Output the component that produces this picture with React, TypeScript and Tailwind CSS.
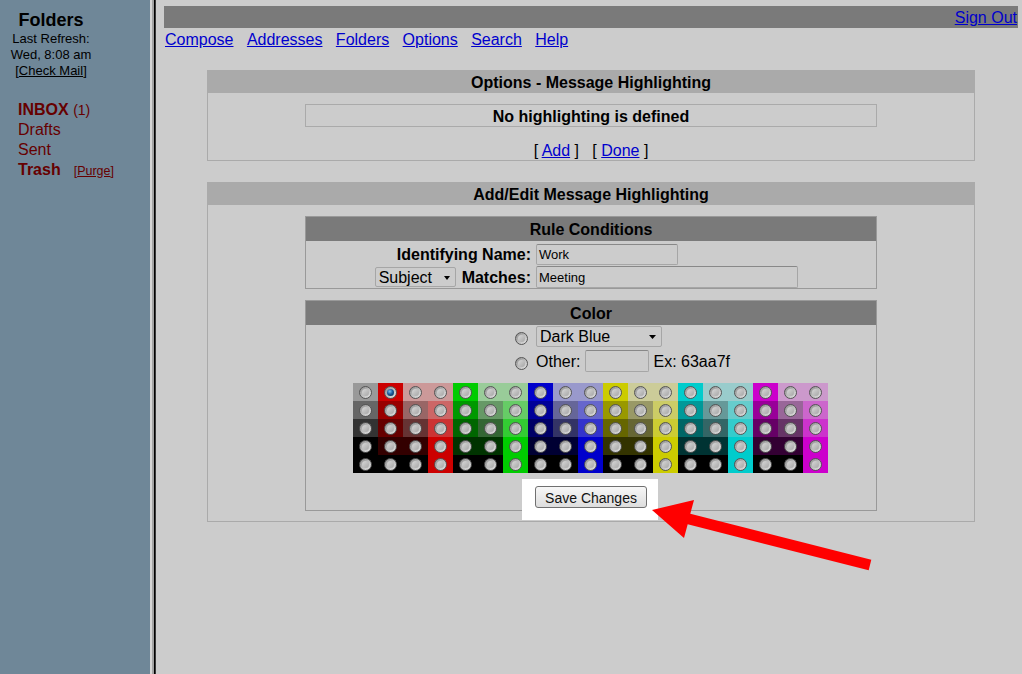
import React from "react";

const grid: string[][] = [
  ["#999999", "#666666", "#333333", "#000000", "#000000"],
  ["#cc0000", "#990000", "#660000", "#330000", "#000000"],
  ["#cc9999", "#996666", "#663333", "#330000", "#000000"],
  ["#cc9999", "#cc6666", "#cc3333", "#cc0000", "#cc0000"],
  ["#00cc00", "#009900", "#006600", "#003300", "#000000"],
  ["#99cc99", "#669966", "#336633", "#003300", "#000000"],
  ["#99cc99", "#66cc66", "#33cc33", "#00cc00", "#00cc00"],
  ["#0000cc", "#000099", "#000066", "#000033", "#000000"],
  ["#9999cc", "#666699", "#333366", "#000033", "#000000"],
  ["#9999cc", "#6666cc", "#3333cc", "#0000cc", "#0000cc"],
  ["#cccc00", "#999900", "#666600", "#333300", "#000000"],
  ["#cccc99", "#999966", "#666633", "#333300", "#000000"],
  ["#cccc99", "#cccc66", "#cccc33", "#cccc00", "#cccc00"],
  ["#00cccc", "#009999", "#006666", "#003333", "#000000"],
  ["#99cccc", "#669999", "#336666", "#003333", "#000000"],
  ["#99cccc", "#66cccc", "#33cccc", "#00cccc", "#00cccc"],
  ["#cc00cc", "#990099", "#660066", "#330033", "#000000"],
  ["#cc99cc", "#996699", "#663366", "#330033", "#000000"],
  ["#cc99cc", "#cc66cc", "#cc33cc", "#cc00cc", "#cc00cc"],
];

const navLinks = ["Compose", "Addresses", "Folders", "Options", "Search", "Help"];

function Radio({ checked }: { checked?: boolean }) {
  return (
    <span className="flex h-[13px] w-[13px] items-center justify-center rounded-full border border-[#555555] bg-[linear-gradient(135deg,#8c8c8c_0%,#b8b8b8_45%,#e4e4e4_100%)]">
      {checked ? (
        <span className="block h-[7px] w-[7px] rounded-full bg-[radial-gradient(circle_at_40%_35%,#7cc0f0_0%,#1a5a9a_45%,#06223f_100%)]" />
      ) : (
        <span className="block h-[7px] w-[7px] rounded-full bg-[linear-gradient(135deg,#d8d8d8,#a6a6a6)]" />
      )}
    </span>
  );
}

function Arrow({ small }: { small?: boolean }) {
  return small ? (
    <svg width="6" height="4" viewBox="0 0 6 4">
      <polygon points="0,0 6,0 3,4" fill="#000" />
    </svg>
  ) : (
    <svg width="7" height="4" viewBox="0 0 7 4">
      <polygon points="0,0 7,0 3.5,4" fill="#000" />
    </svg>
  );
}

function Link({ children }: { children: React.ReactNode }) {
  return <a className="cursor-pointer text-[#0000cc] underline">{children}</a>;
}

export default function App() {
  return (
    <div className="relative flex h-[674px] w-[1022px] overflow-hidden bg-[#cccccc] font-['Liberation_Sans',Arial,sans-serif] text-[16px] text-black">
      {/* folder list */}
      <aside className="w-[150px] shrink-0 bg-[#6f8798]">
        <div className="w-[102px] pt-[10px] text-center">
          <div className="text-[18px] font-bold leading-[21px]">Folders</div>
          <div className="text-[13px] leading-[16px]">Last Refresh:</div>
          <div className="text-[13px] leading-[16px]">Wed, 8:08 am</div>
          <div className="text-[13px] leading-[16px]">
            [<a className="underline">Check Mail</a>]
          </div>
        </div>
        <ul className="mt-[21px] pl-[18px] leading-[20px] text-[#660000]">
          <li>
            <span className="font-bold">INBOX</span> <span className="text-[14px]">(1)</span>
          </li>
          <li>Drafts</li>
          <li>Sent</li>
          <li>
            <span className="font-bold">Trash</span>
            <span className="ml-[13px] text-[12.5px]">
              [<a className="underline">Purge</a>]
            </span>
          </li>
        </ul>
      </aside>
      <div className="w-[2px] shrink-0 bg-[#d4d4d4]" />
      <div className="w-[2px] shrink-0 bg-[#a2a2a2]" />
      <div className="w-[1px] shrink-0 bg-black" />
      <div className="w-[1px] shrink-0 bg-[#3a3a3a]" />

      <main className="flex-1 pl-[8px] pr-[4px] pt-[6px]">
        <div className="flex h-[22px] items-center justify-end bg-[#7a7a7a] pr-[1px] pt-[2px]">
          <Link>Sign Out</Link>
        </div>
        <nav className="mt-[3px] flex h-[17px] gap-[13.4px] pl-[1px] leading-[18px]">
          {navLinks.map((l) => (
            <Link key={l}>{l}</Link>
          ))}
        </nav>

        {/* current highlighting */}
        <section className="mx-auto mt-[22px] w-[768px]">
          <div className="h-[23px] bg-[#aaaaaa] pt-[1px] text-center font-bold leading-[23px]">
            Options - Message Highlighting
          </div>
          <div className="border border-t-0 border-[#aaaaaa] pb-[1px] pt-[11px]">
            <div className="mx-auto flex h-[23px] w-[572px] items-center justify-center border border-[#aaaaaa] pt-[2px] font-bold">
              No highlighting is defined
            </div>
            <div className="mt-[14px] h-[18px] pt-[1px] text-center leading-[18px]">
              [ <Link>Add</Link> ]&nbsp;&nbsp; [ <Link>Done</Link> ]
            </div>
          </div>
        </section>

        {/* add / edit */}
        <section className="mx-auto mt-[21px] w-[768px]">
          <div className="h-[23px] bg-[#aaaaaa] pt-[1px] text-center font-bold leading-[23px]">
            Add/Edit Message Highlighting
          </div>
          <div className="border border-t-0 border-[#aaaaaa] pb-[10px] pt-[11px]">
            <div className="mx-auto w-[572px] border border-[#999999]">
              <div className="h-[24px] bg-[#7a7a7a] pt-[1px] text-center font-bold leading-[24px]">Rule Conditions</div>
              <div className="grid h-[23px] grid-cols-[228px_1fr] items-center">
                <div className="pr-[3px] pt-[2px] text-right font-bold">Identifying Name:</div>
                <div className="pl-[2px]">
                  <div className="flex h-[21px] w-[142px] items-center rounded-[2px] border border-[#a6a6a6] border-t-[#888888] pl-[2px] pt-[1px] text-[13px]">
                    Work
                  </div>
                </div>
              </div>
              <div className="grid h-[24px] grid-cols-[228px_1fr] items-center">
                <div className="flex items-center justify-end gap-[6px] pr-[3px]">
                  <div className="flex h-[20px] w-[81px] items-center justify-between rounded-[2px] border border-[#a6a6a6] pl-[3px] pr-[5px] pt-[1px]">
                    <span>Subject</span>
                    <Arrow small />
                  </div>
                  <span className="pt-[2px] font-bold">Matches:</span>
                </div>
                <div className="pl-[2px]">
                  <div className="flex h-[22px] w-[262px] items-center rounded-[2px] border border-[#a6a6a6] border-t-[#888888] pl-[2px] pt-[1px] text-[13px]">
                    Meeting
                  </div>
                </div>
              </div>
            </div>

            <div className="mx-auto mt-[11px] w-[572px] border border-[#999999] pb-[2px]">
              <div className="h-[24px] bg-[#7a7a7a] pt-[1px] text-center font-bold leading-[24px]">Color</div>
              <div className="grid h-[23px] grid-cols-[228px_1fr] items-center">
                <div className="flex justify-end pr-[6px] pt-[3px]">
                  <Radio />
                </div>
                <div className="pl-[2px]">
                  <div className="flex h-[21px] w-[126px] items-center justify-between rounded-[2px] border border-[#a6a6a6] pl-[3px] pr-[5px] pt-[1px]">
                    <span>Dark Blue</span>
                    <Arrow />
                  </div>
                </div>
              </div>
              <div className="grid h-[24px] grid-cols-[228px_1fr] items-center">
                <div className="flex justify-end pr-[6px] pt-[4px]">
                  <Radio />
                </div>
                <div className="flex items-center pl-[2px]">
                  <span className="pt-[2px]">Other:</span>
                  <div className="ml-[5px] h-[22px] w-[64px] rounded-[2px] border border-[#a6a6a6] border-t-[#888888]" />
                  <span className="ml-[4px] pt-[2px]">Ex: 63aa7f</span>
                </div>
              </div>

              <div className="ml-[47px] mt-[11px] flex w-[475px]">
                {grid.map((col, ci) => (
                  <div key={ci} className="flex w-[25px] flex-col">
                    {col.map((c, ri) => (
                      <div
                        key={ri}
                        className="flex h-[18px] items-center justify-center pt-[1px]"
                        style={{ backgroundColor: c }}
                      >
                        <Radio checked={ci === 1 && ri === 0} />
                      </div>
                    ))}
                  </div>
                ))}
              </div>

              <div className="mt-[13px] flex justify-center">
                <button className="relative z-10 h-[22px] w-[112px] rounded-[3px] border border-[#707070] bg-[linear-gradient(#f7f7f7,#dddddd)] pt-[1px] text-[14px] text-[#111]">
                  Save Changes
                </button>
              </div>
            </div>
          </div>
        </section>
      </main>

      {/* annotation */}
      <div className="absolute left-[522px] top-[479px] z-[5] h-[41px] w-[136px] bg-white" />
      <svg className="pointer-events-none absolute left-0 top-0 z-20" width="1022" height="674">
        <polygon
          points="652,510 694,500 690.3,513.7 871.3,559.7 868.7,570.3 687.7,524.3 684,538"
          fill="#ff0000"
        />
      </svg>
    </div>
  );
}
